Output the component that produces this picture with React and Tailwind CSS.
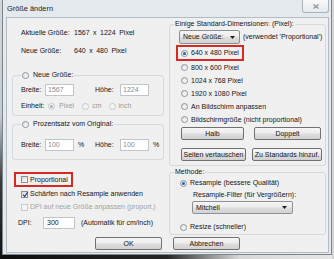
import React from "react";

function Radio({ checked, disabled }) {
  return (
    <span
      className={`flex h-[7px] w-[7px] shrink-0 items-center justify-center rounded-full border ${
        disabled
          ? "border-[#c3c8cd] bg-[#f5f5f5]"
          : "border-[#8c949b] bg-[linear-gradient(135deg,#dedede,#ffffff)]"
      }`}
    >
      {checked && (
        <span
          className={`h-[3px] w-[3px] rounded-full ${
            disabled ? "bg-[#a9adb1]" : "bg-[#1f5fbf]"
          }`}
        />
      )}
    </span>
  );
}

function Check({ checked, disabled }) {
  return (
    <span
      className={`relative flex h-[7px] w-[7px] shrink-0 items-center justify-center border ${
        disabled
          ? "border-[#c6cacd] bg-[#f4f4f4]"
          : "border-[#8e8f8f] bg-[linear-gradient(135deg,#dadada,#fbfbfb)]"
      }`}
    >
      {checked && (
        <svg width="7" height="7" viewBox="0 0 7 7" className="absolute left-0 top-[-1px]">
          <path d="M1 3.6 L2.7 5.4 L5.8 1" stroke="#2b4894" strokeWidth="1.3" fill="none" />
        </svg>
      )}
    </span>
  );
}

function Btn({ w, children }) {
  return (
    <div
      className={`flex h-[13px] items-center justify-center rounded-[2px] border border-[#707070] bg-[linear-gradient(#f6f6f6,#ececec_48%,#dedede_52%,#d1d1d1)] ${w}`}
    >
      {children}
    </div>
  );
}

function Arrow() {
  return (
    <svg width="5" height="3" viewBox="0 0 5 3">
      <path d="M0 0H5L2.5 3Z" fill="#1e1e1e" />
    </svg>
  );
}

function Input({ w, children, dim }) {
  return (
    <div
      className={`flex h-[12px] items-center border border-[#c0c5ca] bg-white pl-[2px] ${w} ${
        dim ? "text-[#8c8c8c]" : "text-[#141414]"
      }`}
    >
      {children}
    </div>
  );
}

function Window() {
  return (
    <div className="flex h-[255px] flex-col border-x border-b border-[#7b858f] bg-[#e4e9ee]">
      <div className="flex h-[17px] items-start justify-between">
        <span className="ml-[4px] mt-[5px] text-[7.4px] leading-[8px] text-[#1a1a1a]">
          Größe ändern
        </span>
        <div className="mr-[2px] flex h-[13px] w-[27px] items-center justify-center rounded-b-[3px] border-x border-b border-[#aab2ba] bg-[linear-gradient(#f7f8f9,#e6eaee)]">
          <svg width="6" height="5" viewBox="0 0 6 5">
            <path d="M0.5 0.5L5.5 4.5M5.5 0.5L0.5 4.5" stroke="#8a9198" strokeWidth="1.1" />
          </svg>
        </div>
      </div>
      <Client />
    </div>
  );
}

function Client() {
  return (
    <div className="ml-[3px] flex h-[236px] w-[323px] flex-col border border-[#b3bcc5] bg-[#f0f0f0]">
      <div className="flex h-[217px]">
        <LeftCol />
        <RightCol />
      </div>
      <div className="mt-[2px] flex gap-[11px] pl-[88px]">
        <Btn w="w-[67px]">OK</Btn>
        <Btn w="w-[67px]">Abbrechen</Btn>
      </div>
    </div>
  );
}

function LeftCol() {
  return (
    <div className="flex w-[159px] flex-col">
      <div className="mt-[11px] flex h-[8px] items-center pl-[14px]">
        <span className="w-[53px]">Aktuelle Größe:</span>
        <span className="flex gap-[3.5px]">
          <span>1567</span>
          <span>x</span>
          <span>1224</span>
          <span>Pixel</span>
        </span>
      </div>
      <div className="mt-[10px] flex h-[8px] items-center pl-[14px]">
        <span className="w-[53px]">Neue Größe:</span>
        <span className="flex gap-[3.5px]">
          <span>640</span>
          <span>x</span>
          <span>480</span>
          <span>Pixel</span>
        </span>
      </div>

      <fieldset className="ml-[5px] mt-[16px] w-[152px] rounded-[3px] border border-[#d3d9df] pb-[5px] pl-[8px]">
        <legend className="px-[1px]">
          <span className="flex h-[8px] items-center gap-[4px]">
            <Radio />
            <span>Neue Größe:</span>
          </span>
        </legend>
        <div className="mt-[5px] flex h-[12px] items-center">
          <span className="w-[24px]">Breite:</span>
          <Input w="w-[29px]" dim>1567</Input>
          <span className="w-[21px]" />
          <span className="w-[25px]">Höhe:</span>
          <Input w="w-[29px]" dim>1224</Input>
        </div>
        <div className="mt-[6px] flex h-[8px] items-center">
          <span className="w-[27px]">Einheit:</span>
          <Radio checked disabled />
          <span className="ml-[4px] text-[#9a9a9a]">Pixel</span>
          <span className="ml-[8px]">
            <Radio disabled />
          </span>
          <span className="ml-[3px] text-[#9a9a9a]">cm</span>
          <span className="ml-[7px]">
            <Radio disabled />
          </span>
          <span className="ml-[3px] text-[#9a9a9a]">inch</span>
        </div>
      </fieldset>

      <fieldset className="ml-[5px] mt-[4px] w-[152px] rounded-[3px] border border-[#d3d9df] pb-[8px] pl-[8px]">
        <legend className="px-[1px]">
          <span className="flex h-[8px] items-center gap-[4px]">
            <Radio />
            <span>Prozentsatz vom Original:</span>
          </span>
        </legend>
        <div className="mt-[11px] flex h-[12px] items-center">
          <span className="w-[24px]">Breite:</span>
          <Input w="w-[29px]" dim>100</Input>
          <span className="w-[21px] pl-[4px]">%</span>
          <span className="w-[25px]">Höhe:</span>
          <Input w="w-[29px]" dim>100</Input>
          <span className="pl-[4px]">%</span>
        </div>
      </fieldset>

      <div className="ml-[7px] mt-[12px] flex h-[15px] w-[59px] items-center gap-[2px] border-2 border-[#d42a22] pl-[5px]">
        <Check />
        <span>Proportional</span>
      </div>
      <div className="mt-[3px] flex h-[8px] items-center gap-[2px] pl-[14px]">
        <Check checked />
        <span>Schärfen nach Resample anwenden</span>
      </div>
      <div className="mt-[5px] flex h-[8px] items-center gap-[2px] pl-[14px]">
        <Check disabled />
        <span className="text-[#a3a3a3]">DPI auf neue Größe anpassen (proport.)</span>
      </div>
      <div className="mt-[6px] flex h-[12px] items-center pl-[11px]">
        <span className="w-[25px]">DPI:</span>
        <Input w="w-[32px]">
          <span className="pl-[1px]">300</span>
        </Input>
        <span className="ml-[6px]">(Automatik für cm/inch)</span>
      </div>
    </div>
  );
}

function RadioRow({ label, checked }) {
  return (
    <div className="flex h-[13px] items-center gap-[3px] pl-[7px]">
      <Radio checked={checked} />
      <span>{label}</span>
    </div>
  );
}

function RightCol() {
  return (
    <div className="flex flex-1 flex-col">
      <fieldset className="ml-[3px] mt-[2px] w-[157px] rounded-[3px] border border-[#d3d9df] pb-[4px] pl-[4px]">
        <legend className="px-[1px]">
          <span className="flex h-[8px] items-center">Einige Standard-Dimensionen: (Pixel):</span>
        </legend>
        <div className="mt-[2px] flex h-[14px] items-center pl-[5px]">
          <div className="flex h-[14px] w-[61px] items-center justify-between rounded-[2px] border border-[#8b9096] bg-[linear-gradient(#f5f5f5,#ebebeb_48%,#dddddd_52%,#d3d3d3)] pl-[3px] pr-[4px]">
            <span>Neue Größe:</span>
            <Arrow />
          </div>
          <span className="ml-[3px]">(verwendet 'Proportional')</span>
        </div>
        <div className="ml-[2px] mt-[1px] flex h-[16px] w-[68px] items-center gap-[3px] border-2 border-[#d42a22] pl-[3px]">
          <Radio checked />
          <span>640 x 480 Pixel</span>
        </div>
        <RadioRow label="800 x 600 Pixel" />
        <RadioRow label="1024 x 768 Pixel" />
        <RadioRow label="1920 x 1080 Pixel" />
        <RadioRow label="An Bildschirm anpassen" />
        <RadioRow label="Bildschirmgröße (nicht proportional)" />
        <div className="mt-[1px] flex gap-[10px] pl-[7px]">
          <Btn w="w-[63px]">Halb</Btn>
          <Btn w="w-[67px]">Doppelt</Btn>
        </div>
        <div className="mt-[8px] flex gap-[6px] pl-[7px]">
          <Btn w="w-[65px]">Seiten vertauschen</Btn>
          <Btn w="w-[70px]">Zu Standards hinzuf.</Btn>
        </div>
      </fieldset>

      <fieldset className="ml-[3px] mt-[2px] w-[157px] rounded-[3px] border border-[#d3d9df] pb-[3px] pl-[4px]">
        <legend className="px-[1px]">
          <span className="flex h-[8px] items-center">Methode:</span>
        </legend>
        <div className="mt-[3px] flex h-[8px] items-center gap-[3px] pl-[6px]">
          <Radio checked />
          <span>Resample (bessere Qualität)</span>
        </div>
        <div className="mt-[4px] flex h-[8px] items-center pl-[19px]">
          Resample-Filter (für Vergrößern):
        </div>
        <div className="ml-[18px] mt-[2px] flex h-[13px] w-[101px] items-center justify-between rounded-[2px] border border-[#8b9096] bg-[linear-gradient(#f5f5f5,#ebebeb_48%,#dddddd_52%,#d3d3d3)] pl-[3px] pr-[5px]">
          <span>Mitchell</span>
          <Arrow />
        </div>
        <div className="mt-[9px] flex h-[8px] items-center gap-[3px] pl-[6px]">
          <Radio />
          <span>Resize (schneller)</span>
        </div>
      </fieldset>
    </div>
  );
}

export default function App() {
  return (
    <div className="flex h-[259px] w-[334px] overflow-hidden bg-[#dcdcdc] font-['Liberation_Sans',Arial,sans-serif] text-[7px] leading-[8px] text-[#141414]">
      <div className="h-full w-[2px] shrink-0 bg-[linear-gradient(to_bottom,#d6d6d6,#c9c9c9_45%,#3a3a3a_70%,#111111)]" />
      <div className="flex w-[330px] shrink-0 flex-col">
        <Window />
        <div className="h-[4px] bg-[linear-gradient(to_right,#0e0e0e,#262626_50%,#8a8a8a_62%,#d8d8d8_72%,#e6e6e6)]" />
      </div>
      <div className="h-full w-[2px] shrink-0 bg-[#d5d5d5]" />
    </div>
  );
}
